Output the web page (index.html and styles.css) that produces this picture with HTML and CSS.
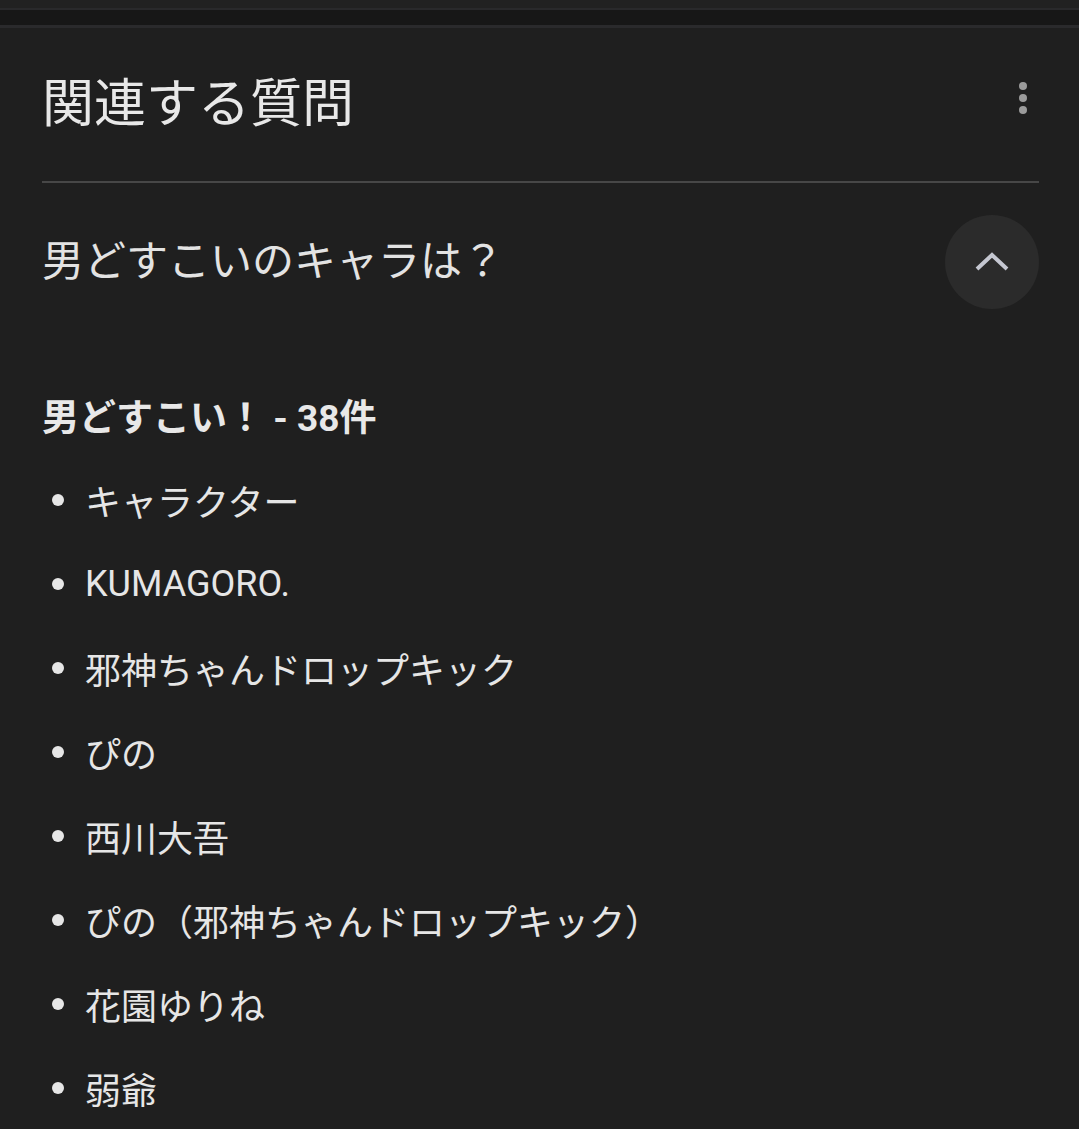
FILE: index.html
```html
<!DOCTYPE html>
<html lang="ja">
<head>
    <meta charset="UTF-8" />
    <title>関連する質問</title>
    <link rel="stylesheet" href="styles.css">
</head>
<body>

<!-- 上部のバー -->
<div class="topbar"></div>
<div class="topbar-strip"></div>

<div class="panel">
    <div class="panel-head">
        <h2 class="panel-title">関連する質問</h2>
        <button class="more-btn" aria-label="メニュー">
            <svg width="10" height="34" viewBox="0 0 10 34">
                <circle cx="5" cy="5" r="4" fill="#9b9b9b"/>
                <circle cx="5" cy="17" r="4" fill="#9b9b9b"/>
                <circle cx="5" cy="29" r="4" fill="#9b9b9b"/>
            </svg>
        </button>
    </div>

    <div class="question">
        <div class="question-text">男どすこいのキャラは？</div>
        <button class="toggle-btn" aria-label="閉じる">
            <svg width="40" height="40" viewBox="0 0 40 40">
                <polyline points="5,27 20,13 35,27" fill="none" stroke="#c5c7d1" stroke-width="4"/>
            </svg>
        </button>
    </div>

    <div class="answer">
        <h3 class="answer-title">男どすこい！ - 38件</h3>
        <ul class="answer-list">
            <li>キャラクター</li>
            <li>KUMAGORO.</li>
            <li>邪神ちゃんドロップキック</li>
            <li>ぴの</li>
            <li>西川大吾</li>
            <li>ぴの（邪神ちゃんドロップキック）</li>
            <li>花園ゆりね</li>
            <li>弱爺</li>
        </ul>
    </div>
</div>

</body>
</html>
```

FILE: styles.css
```css
body {
    margin: 0;
    background: #1f1f1f;
    font-family: Roboto, "Noto Sans CJK JP", sans-serif;
    color: #e6e6e6;
}
.topbar {
    height: 8px;
    background: #212121;
}
.topbar-strip {
    height: 15px;
    background: #171717;
    border-top: 2px solid #29292b;
    border-bottom: 3px solid #2a2a2c;
}
.panel {
    padding: 0 40px 0 42px;
}
.panel-head {
    display: flex;
    justify-content: space-between;
    align-items: flex-start;
    border-bottom: 2px solid #474747;
    padding-top: 47px;
    padding-bottom: 46px;
}
.panel-title {
    margin: 0;
    font-size: 52px;
    line-height: 60px;
    font-weight: 400;
    color: #e8e8e8;
}
.more-btn {
    background: none;
    border: none;
    padding: 0;
    margin: 6px 11px 0 0;
    cursor: pointer;
}
.question {
    display: flex;
    justify-content: space-between;
    align-items: center;
    padding-top: 32px;
}
.question-text {
    font-size: 42px;
    line-height: 50px;
    color: #e3e3e3;
}
.toggle-btn {
    width: 94px;
    height: 94px;
    border-radius: 50%;
    background: #2b2b2b;
    border: none;
    display: flex;
    align-items: center;
    justify-content: center;
    cursor: pointer;
    padding: 0;
}
.answer {
    margin-top: 85px;
}
.answer-title {
    margin: 0;
    font-size: 37px;
    line-height: 50px;
    font-weight: 700;
    color: #e8e8e8;
}
.answer-list {
    list-style: none;
    margin: 14px 0 0 0;
    padding: 0;
}
.answer-list li {
    display: flex;
    align-items: center;
    height: 84px;
    font-size: 36px;
    color: #e6e6e6;
}
.answer-list li::before {
    content: "";
    width: 12px;
    height: 12px;
    border-radius: 50%;
    background: #e6e6e6;
    margin: 0 21px 0 10px;
    flex-shrink: 0;
}
```
